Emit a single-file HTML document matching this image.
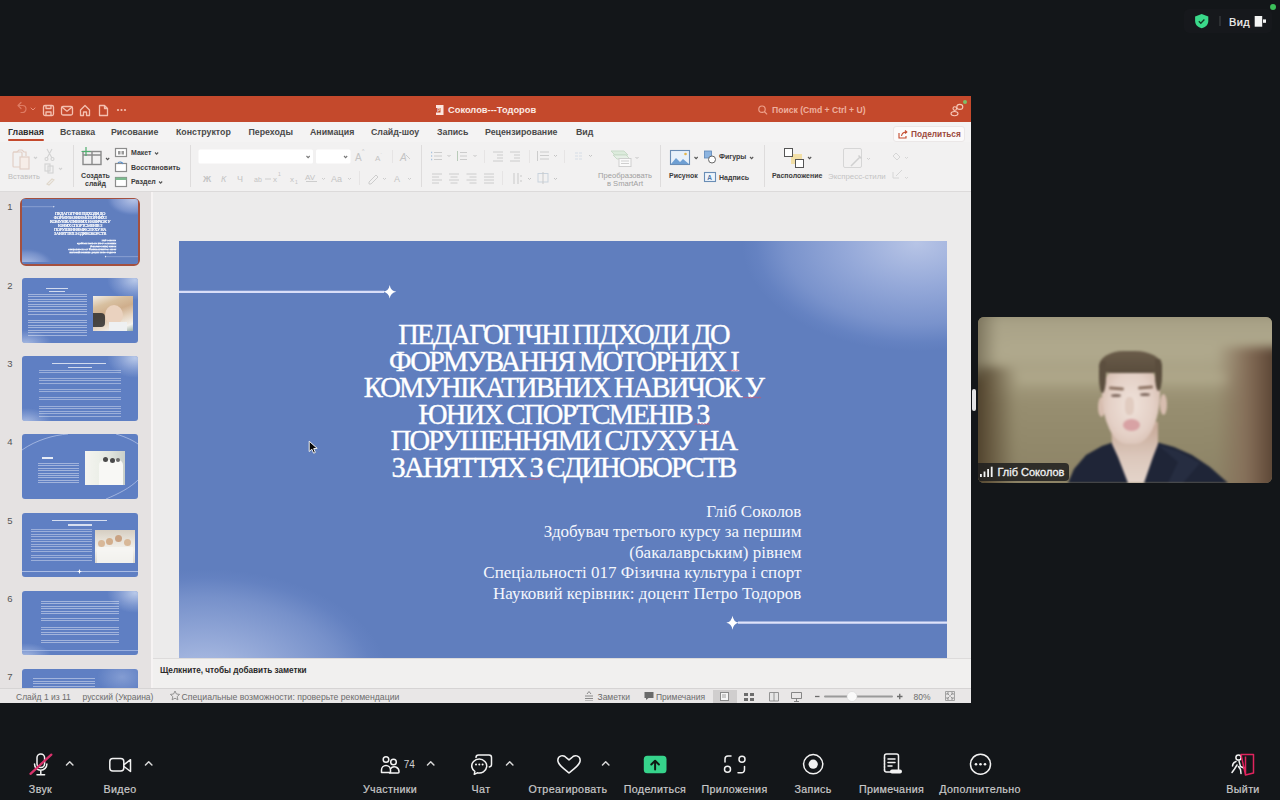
<!DOCTYPE html>
<html><head><meta charset="utf-8">
<style>
*{margin:0;padding:0;box-sizing:border-box}
html,body{width:1280px;height:800px;overflow:hidden;background:#131619;font-family:"Liberation Sans",sans-serif}
.abs{position:absolute}
#win{position:absolute;left:0;top:96px;width:971px;height:607px;background:#f2f1f1;overflow:hidden}
#title{position:absolute;left:0;top:0;width:971px;height:26px;background:#c4492c}
#tabs{position:absolute;left:0;top:26px;width:971px;height:20px;background:#f4f3f3}
#ribbon{position:absolute;left:0;top:46px;width:971px;height:50px;background:#f2f1f1;border-bottom:1px solid #dcdada}
#thumbs{position:absolute;left:0;top:96px;width:153px;height:496px;background:#e5e2e2;border-right:2px solid #f6f3f3}
#stage{position:absolute;left:153px;top:96px;width:818px;height:466px;background:#ecebeb}
#notes{position:absolute;left:153px;top:562px;width:819px;height:30px;background:#f1f0ef;border-top:1px solid #dddbdb}
#status{position:absolute;left:0;top:592px;width:971px;height:15px;background:#e9e7e7;border-top:1px solid #d6d4d4}
#slide{position:absolute;left:179px;top:241px;width:768px;height:417px;background:#607ebe;overflow:hidden}
#video{position:absolute;left:978px;top:317px;width:294px;height:166px;border-radius:6px;background:#8a8266;overflow:hidden}
.tab{position:absolute;top:5px;font-size:8.8px;font-weight:bold;color:#4a4a4a;white-space:nowrap}
.rl{position:absolute;font-size:7px;font-weight:bold;color:#3c3c3c;white-space:nowrap}
.thumb{background:#5f7fc3;border-radius:3px;overflow:hidden}
.thumb>div,.thumb>svg{filter:blur(0.6px)}
.st{position:absolute;top:2.5px;font-size:8.5px;color:#6c6c6c;white-space:nowrap}
.tb{position:absolute;top:782.5px;color:#c9c9c9;font-size:10.7px;letter-spacing:0.35px;-webkit-text-stroke:0.2px #c9c9c9;text-align:center;white-space:nowrap}
</style></head>
<body>
<div id="win">
  <div id="title">
    <svg class="abs" style="left:0;top:0" width="971" height="26" viewBox="0 0 971 26">
      <g fill="none" stroke="#e9917a" stroke-width="1.2" stroke-linecap="round" stroke-linejoin="round">
        <path d="M19 11.5 L22 8.5 M19 11.5 L22 14.5 M19 11.5 H23.5 a3.5 3.5 0 0 1 0 7 H22" opacity="0.7" transform="translate(-1,-2)"/>
        <path d="M31 12 l2 2 l2 -2" stroke-width="1"/>
      </g>
      <g fill="none" stroke="#f4c0b0" stroke-width="1.3" stroke-linejoin="round">
        <rect x="43.5" y="9.5" width="10" height="10" rx="1.5"/>
        <path d="M46 9.5 v3 h5 v-3 M46 19.5 v-3.5 h5 v3.5"/>
        <rect x="61.5" y="10.5" width="11" height="8.5" rx="1.5"/>
        <path d="M61.8 11 l5.2 4.2 l5.2 -4.2"/>
        <path d="M80.5 19.5 v-5.5 l4.5 -4.5 l4.5 4.5 v5.5 h-3 v-3.5 h-3 v3.5 z"/>
        <path d="M99.5 9.5 h5 l3 3 v7 h-8 z M104.5 9.5 v3 h3"/>
      </g>
      <g fill="#f4c0b0"><circle cx="118" cy="14" r="1.1"/><circle cx="121.5" cy="14" r="1.1"/><circle cx="125" cy="14" r="1.1"/></g>
      <g>
        <rect x="436" y="9" width="7.5" height="10" fill="#fbe6df"/>
        <rect x="436" y="12" width="4.5" height="4.5" fill="#c4492c"/>
        <text x="437.2" y="16" font-family="Liberation Sans" font-weight="bold" font-size="4.5" fill="#fbe6df">P</text>
      </g>
      <g fill="none" stroke="#eea08a" stroke-width="1.2"><circle cx="762" cy="13.2" r="3.2"/><path d="M764.3 15.5 l2.8 2.8"/></g>
      <g fill="none" stroke="#f6c8b8" stroke-width="1.1">
        <ellipse cx="959.8" cy="10.9" rx="3" ry="2.5"/>
        <circle cx="954.8" cy="12.6" r="1.8"/><ellipse cx="954.5" cy="17.6" rx="3.5" ry="2.1"/>
      </g>
      <circle cx="965" cy="6" r="2" fill="#7fbf6a"/>
    </svg>
    <div class="abs" style="left:448px;top:9px;font-size:9.3px;font-weight:bold;color:#fbeae4;letter-spacing:0px;white-space:nowrap">Соколов---Тодоров</div>
    <div class="abs" style="left:772px;top:9px;font-size:8.6px;font-weight:bold;color:#eeb09e;white-space:nowrap">Поиск (Cmd + Ctrl + U)</div>
  </div>
  <div id="tabs">
    <div class="tab" style="left:8px;color:#2e2e2e">Главная</div>
    <div class="abs" style="left:8px;top:17px;width:36px;height:2px;background:#c4492c;border-radius:1px"></div>
    <div class="tab" style="left:60px">Вставка</div>
    <div class="tab" style="left:111px">Рисование</div>
    <div class="tab" style="left:176px">Конструктор</div>
    <div class="tab" style="left:248.5px">Переходы</div>
    <div class="tab" style="left:310px">Анимация</div>
    <div class="tab" style="left:371px">Слайд-шоу</div>
    <div class="tab" style="left:437px">Запись</div>
    <div class="tab" style="left:485px">Рецензирование</div>
    <div class="tab" style="left:576px">Вид</div>
    <div class="abs" style="left:893px;top:4px;width:72px;height:16px;background:#fbfafa;border:1px solid #ebe7e7;border-radius:3px"></div>
    <svg class="abs" style="left:897px;top:6px" width="12" height="12" viewBox="0 0 12 12"><g fill="none" stroke="#c4492c" stroke-width="1.1"><path d="M2 5 v5 h7 v-2"/><path d="M4.5 8 c0.5 -3 2 -4 5 -4 M8 2.5 l1.8 1.5 l-1.8 1.5"/></g></svg>
    <div class="abs" style="left:911px;top:7px;font-size:8.3px;font-weight:bold;color:#9c4a3e;white-space:nowrap">Поделиться</div>
  </div>
  <div id="ribbon">
    <svg class="abs" style="left:0;top:0" width="971" height="50" viewBox="0 142 971 50">
      <!-- separators -->
      <g stroke="#dedcdc" stroke-width="1">
        <path d="M73.5 145 V187 M190.5 145 V187 M421.5 145 V187 M660.5 145 V187 M764.5 145 V187"/>
        <path d="M392.5 150 V163 M359.5 171 V185 M484.5 150 V163 M529.5 150 V163 M564.5 150 V163 M502.5 171 V185" stroke="#e6e4e4"/>
      </g>
      <!-- clipboard faded -->
      <g fill="none" stroke="#e2cfc6" stroke-width="1.2">
        <path d="M13 152 h4 l2 -2 h3 l2 2 h2 v4"/><rect x="13" y="152" width="9" height="15" rx="1"/>
        <rect x="20" y="157" width="9" height="12" fill="#f6ede8"/>
        <path d="M34 157 l1.5 1.5 l1.5 -1.5" stroke="#cfcfcf"/>
      </g>
      <g fill="none" stroke="#d2d2d2" stroke-width="1.1">
        <path d="M47 149 l5 9 M52 149 l-5 9"/><circle cx="46.5" cy="159" r="1.5"/><circle cx="52.5" cy="159" r="1.5"/>
        <rect x="45" y="164" width="5" height="7"/><rect x="48" y="166" width="5" height="7"/>
        <path d="M59 168 l1.5 1.5 l1.5 -1.5"/>
        <path d="M47 184 l5 -5 l2 1 l-5 5 z" stroke="#e0d8cc"/>
      </g>
      <!-- new slide -->
      <g fill="none" stroke="#8a8a8a" stroke-width="1.4">
        <rect x="83" y="151.5" width="18" height="13"/><path d="M92 151.5 v13 M83 155 h18"/>
      </g>
      <path d="M86 147 v9 M81.5 151.5 h9" stroke="#4fae6e" stroke-width="1.2"/>
      <path d="M106 158 l1.6 1.6 l1.6 -1.6" fill="none" stroke="#555" stroke-width="1.1"/>
      <!-- layout icons -->
      <g>
        <rect x="115.5" y="148.5" width="11" height="8" fill="#fff" stroke="#8c8c8c" stroke-width="1.2"/>
        <rect x="118" y="151" width="2.5" height="3.5" fill="#9a9a9a"/><rect x="121.5" y="151" width="2.5" height="3.5" fill="#9a9a9a"/>
        <rect x="115.5" y="163.5" width="11" height="8" fill="#fff" stroke="#8c8c8c" stroke-width="1.2"/>
        <path d="M118 163 a3 3 0 0 1 5 1" fill="none" stroke="#5a8fc9" stroke-width="1.1"/>
        <rect x="115.5" y="177.5" width="11" height="9" fill="#fff" stroke="#8c8c8c" stroke-width="1.2"/>
        <rect x="115.5" y="177.5" width="11" height="2.5" fill="#7cba8e"/>
        <g fill="none" stroke="#555" stroke-width="1.1"><path d="M155 152.5 l1.6 1.6 l1.6 -1.6 M159 181.5 l1.6 1.6 l1.6 -1.6"/></g>
      </g>
      <!-- font boxes -->
      <rect x="198.5" y="149.5" width="114.5" height="14" rx="1.5" fill="#fff"/>
      <rect x="316" y="149.5" width="34.5" height="14" rx="1.5" fill="#fff"/>
      <g fill="none" stroke="#777" stroke-width="1.1"><path d="M306.5 156 l1.6 1.6 l1.6 -1.6 M344 156 l1.6 1.6 l1.6 -1.6"/></g>
      <g font-family="Liberation Sans" fill="#c4c4c4">
        <text x="355" y="161" font-size="10">A</text><text x="362" y="153" font-size="5">^</text>
        <text x="375" y="161" font-size="8">A</text><text x="380.5" y="154" font-size="4">-</text>
        <text x="400" y="161" font-size="10" font-style="italic">A</text>
        <text x="203" y="182" font-size="9" font-weight="bold">Ж</text>
        <text x="221" y="182" font-size="9" font-style="italic">К</text>
        <text x="237" y="182" font-size="9">Ч</text>
        <text x="254" y="182" font-size="7">ab</text>
        <text x="273" y="182" font-size="8">x</text><text x="278" y="176" font-size="5">1</text>
        <text x="290" y="182" font-size="8">x</text><text x="295" y="184" font-size="5">1</text>
        <text x="305" y="180" font-size="8">AV</text>
        <text x="331" y="182" font-size="9">Aa</text>
        <text x="394" y="182" font-size="9">A</text>
      </g>
      <g fill="none" stroke="#cdcdcd" stroke-width="1">
        <path d="M265 179 h6 M306 181.5 h11"/>
        <path d="M322 178 l1.5 1.5 l1.5 -1.5 M348 178 l1.5 1.5 l1.5 -1.5 M383 178 l1.5 1.5 l1.5 -1.5 M408 178 l1.5 1.5 l1.5 -1.5"/>
        <path d="M369 182 l7 -7 l2 2 l-7 7 h-2 z"/>
        <path d="M406 155 l4 4"/>
      </g>
      <!-- paragraph -->
      <g fill="none" stroke="#cfd6de" stroke-width="1">
        <path d="M434 152.5 h8 M434 156 h8 M434 159.5 h8" stroke="#cccccc"/>
        <path d="M431 152.5 h1.2 M431 156 h1.2 M431 159.5 h1.2" stroke="#a9c3df" stroke-width="1.4"/>
        <path d="M460 152.5 h7 M460 156 h7 M460 159.5 h7" stroke="#cccccc"/>
        <path d="M457.5 151 v10" stroke="#b9cbb9"/>
        <path d="M447.5 155 l1.5 1.5 l1.5 -1.5 M473.5 155 l1.5 1.5 l1.5 -1.5 M554 155 l1.5 1.5 l1.5 -1.5 M589 155 l1.5 1.5 l1.5 -1.5" stroke="#c4c4c4"/>
        <path d="M493 152 h10 M497 155 h6 M497 158 h6 M493 161 h10 M510 152 h10 M514 155 h6 M514 158 h6 M510 161 h10" stroke="#cccccc"/>
        <path d="M540 152 h9 M540 155.5 h9 M540 159 h9 M537.5 151 v10" stroke="#cccccc"/>
        <path d="M575 153 h3 M579 153 h3 M575 156 h3 M579 156 h3 M575 159 h3 M579 159 h3" stroke="#d6dde6"/>
        <path d="M432 174 h10 M432 177 h7 M432 180 h10 M432 183 h7" stroke="#cccccc"/>
        <path d="M449 174 h10 M450.5 177 h7 M449 180 h10 M450.5 183 h7" stroke="#cccccc"/>
        <path d="M466.5 174 h10 M469.5 177 h7 M466.5 180 h10 M469.5 183 h7" stroke="#cccccc"/>
        <path d="M484 174 h10 M484 177 h10 M484 180 h10 M484 183 h10" stroke="#cccccc"/>
        <path d="M514 173 v11 M518 173 v11 M520 176 h2 M520 181 h2" stroke="#c9c9c9"/>
        <path d="M528 178 l1.5 1.5 l1.5 -1.5 M554 178 l1.5 1.5 l1.5 -1.5" stroke="#c4c4c4"/>
        <rect x="538" y="173.5" width="10" height="8.5" stroke="#c9d3dd"/><path d="M543 172 v12" stroke="#c9c9c9"/>
      </g>
      <!-- smartart -->
      <g fill="none" stroke="#cfcfcf" stroke-width="1">
        <path d="M611 151 h13 l4 4 h-13 z" fill="#dcebdc" stroke="#c9dbc9"/>
        <path d="M613 155 h13 l4 4 h-13 z" fill="#e6efe6" stroke="#c9dbc9"/>
        <rect x="619" y="158.5" width="12" height="8" fill="#fafafa"/>
        <path d="M621 161 h8 M621 163.5 h8"/>
        <path d="M635.5 157 l1.5 1.5 l1.5 -1.5" stroke="#c4c4c4"/>
      </g>
      <!-- picture -->
      <g>
        <rect x="670.5" y="150.5" width="19" height="14" fill="#e8f1fa" stroke="#6a8db5" stroke-width="1.1"/>
        <path d="M671 164 l5 -6 l4 4 l3 -3 l6 5 z" fill="#6e9fd3"/>
        <circle cx="685.5" cy="154" r="1.3" fill="#e5b64a"/>
        <path d="M694.5 157 l1.6 1.6 l1.6 -1.6" fill="none" stroke="#555" stroke-width="1.1"/>
        <rect x="704.5" y="151" width="7" height="7" fill="#8cb4e0" stroke="#5d87b8" stroke-width="0.8"/>
        <circle cx="712" cy="159.5" r="3.5" fill="#fff" stroke="#666" stroke-width="1"/>
        <path d="M750 157 l1.6 1.6 l1.6 -1.6" fill="none" stroke="#555" stroke-width="1.1"/>
        <rect x="704.5" y="172.5" width="11" height="9" fill="#eef4fb" stroke="#6a8db5" stroke-width="1.1"/>
        <text x="707.2" y="180" font-family="Liberation Sans" font-size="6.5" fill="#4f78a8" font-weight="bold">A</text>
      </g>
      <!-- arrange -->
      <g>
        <rect x="791" y="154" width="11" height="10" fill="#f2dfa6"/>
        <rect x="784.5" y="148.5" width="8" height="8" fill="#fff" stroke="#555" stroke-width="1"/>
        <rect x="795.5" y="159.5" width="8" height="8" fill="#fff" stroke="#555" stroke-width="1"/>
        <path d="M808 157 l1.6 1.6 l1.6 -1.6" fill="none" stroke="#555" stroke-width="1.1"/>
      </g>
      <!-- express styles -->
      <g fill="none" stroke="#d6d6d6" stroke-width="1">
        <rect x="843.5" y="148.5" width="18" height="19" rx="1.5"/>
        <path d="M851 166 l9 -9 M858.5 155.5 l3 3" stroke="#d0d0d0" stroke-width="1.5"/>
        <path d="M867 158 l1.5 1.5 l1.5 -1.5" stroke="#d0d0d0"/>
        <path d="M893 156 l3 -3 l4 4 l-3 3 z M896 176 l6 -6 M893 172 v6 h6"/>
        <path d="M905 157 l1.5 1.5 l1.5 -1.5 M905 177 l1.5 1.5 l1.5 -1.5"/>
      </g>
    </svg>
    <div class="rl" style="left:8px;top:30px;font-size:7.5px;color:#bcbcbc;font-weight:normal">Вставить</div>
    <div class="rl" style="left:81px;top:30px;width:29px;text-align:center;line-height:8px">Создать<br>слайд</div>
    <div class="rl" style="left:131px;top:7px">Макет</div>
    <div class="rl" style="left:131px;top:22px">Восстановить</div>
    <div class="rl" style="left:131px;top:36px">Раздел</div>
    <div class="rl" style="left:597px;top:30px;width:56px;text-align:center;line-height:8px;font-weight:normal;color:#a0a0a0;font-size:7.6px">Преобразовать<br>в SmartArt</div>
    <div class="rl" style="left:669px;top:30px">Рисунок</div>
    <div class="rl" style="left:719px;top:11px">Фигуры</div>
    <div class="rl" style="left:719px;top:32px">Надпись</div>
    <div class="rl" style="left:772px;top:30px">Расположение</div>
    <div class="rl" style="left:828px;top:30px;font-weight:normal;color:#c4c4c4;font-size:7.9px">Экспресс-стили</div>
  </div>
  <div id="thumbs"></div>
  <div id="stage"></div>
  <div id="notes">
    <div class="abs" style="left:7px;top:6.5px;font-size:8.2px;font-weight:bold;color:#2a2a2a;white-space:nowrap">Щелкните, чтобы добавить заметки</div>
  </div>
  <div id="status">
    <div class="st" style="left:16px">Слайд 1 из 11</div>
    <div class="st" style="left:82.5px">русский (Украина)</div>
    <svg class="abs" style="left:169px;top:1px" width="12" height="12" viewBox="0 0 12 12"><path d="M6 1 l1.4 3 l3.2 0.4 l-2.4 2.2 l0.7 3.2 l-2.9 -1.6 l-2.9 1.6 l0.7 -3.2 l-2.4 -2.2 l3.2 -0.4 z" fill="none" stroke="#8a8a8a" stroke-width="0.9"/></svg>
    <div class="st" style="left:181.5px;font-size:8.7px">Специальные возможности: проверьте рекомендации</div>
    <svg class="abs" style="left:584px;top:2px" width="10" height="10" viewBox="0 0 10 10"><g stroke="#8a8a8a" stroke-width="1"><path d="M1 5 h8 M1 7.5 h8 M1 10 h8"/><path d="M3 3 l2 -2.5 l2 2.5" fill="none"/></g></svg>
    <div class="st" style="left:597.5px">Заметки</div>
    <svg class="abs" style="left:644px;top:2px" width="10" height="10" viewBox="0 0 10 10"><path d="M0.5 1 h9 v6 h-5 l-2.5 2 v-2 h-1.5 z" fill="#6a6a6a"/></svg>
    <div class="st" style="left:656px">Примечания</div>
    <div class="abs" style="left:713px;top:1px;width:24px;height:14px;background:#d0cece"></div>
    <svg class="abs" style="left:700px;top:0" width="271" height="15" viewBox="700 688 271 15">
      <rect x="720.5" y="691.5" width="8" height="8" fill="#f6f6f6" stroke="#8a8a8a"/>
      <path d="M722 694 h4 M722 696 h4" stroke="#8a8a8a" stroke-width="0.8"/>
      <g fill="#6c6c6c"><rect x="744" y="692" width="4" height="3"/><rect x="750" y="692" width="4" height="3"/><rect x="744" y="697" width="4" height="3"/><rect x="750" y="697" width="4" height="3"/></g>
      <path d="M769.5 691.5 h9 v8.5 h-9 z M774 691.5 v8.5" fill="#e6e6e6" stroke="#8a8a8a" stroke-width="0.9"/>
      <path d="M791.5 691.5 h10 v6 h-10 z M796.5 697.5 v3 M794 700.5 h5" fill="none" stroke="#7a7a7a" stroke-width="0.9"/>
      <path d="M815 695.5 h4.5" stroke="#6c6c6c" stroke-width="1.3"/>
      <path d="M825 695.5 H892" stroke="#9a9a9a" stroke-width="2" stroke-linecap="round"/>
      <circle cx="852" cy="695.5" r="5" fill="#fafafa" stroke="#d0d0d0" stroke-width="0.5"/>
      <path d="M897 695.5 h5.5 M899.75 692.75 v5.5" stroke="#6c6c6c" stroke-width="1.3"/>
      <path d="M945.5 690.5 h9 v9 h-9 z" fill="none" stroke="#9a9a9a" stroke-width="0.9"/><path d="M947.5 692.5 l2 2 M952.5 692.5 l-2 2 M947.5 697.5 l2 -2 M952.5 697.5 l-2 -2 M947 692 h2 M947 692 v2 M953 692 h-2 M953 692 v2 M947 698 h2 M947 698 v-2 M953 698 h-2 M953 698 v-2" fill="none" stroke="#8a8a8a" stroke-width="0.9"/>
    </svg>
    <div class="st" style="left:913.5px">80%</div>
  </div>
</div>
<div id="thpanel" class="abs" style="left:0;top:192px;width:151px;height:496px;overflow:hidden">
<div class="abs" style="left:5.5px;top:8.5px;width:9px;text-align:center;font-size:9.5px;color:#555">1</div>
<div class="abs" style="left:5.5px;top:87.5px;width:9px;text-align:center;font-size:9.5px;color:#555">2</div>
<div class="abs" style="left:5.5px;top:165.5px;width:9px;text-align:center;font-size:9.5px;color:#555">3</div>
<div class="abs" style="left:5.5px;top:243.5px;width:9px;text-align:center;font-size:9.5px;color:#555">4</div>
<div class="abs" style="left:5.5px;top:322.5px;width:9px;text-align:center;font-size:9.5px;color:#555">5</div>
<div class="abs" style="left:5.5px;top:400.5px;width:9px;text-align:center;font-size:9.5px;color:#555">6</div>
<div class="abs" style="left:5.5px;top:478.5px;width:9px;text-align:center;font-size:9.5px;color:#555">7</div>
<div class="abs" style="left:19.5px;top:5.5px;width:120px;height:68.5px;border:2px solid #a4503f;border-radius:6px"></div>
<div class="abs thumb" style="left:22px;top:7px;width:116px;height:65px"><div id="t1" class="abs" style="left:0;top:0;width:768px;height:432px;transform:scale(0.15104);transform-origin:0 0;background:#607ebe">
  <div class="abs" style="left:0;top:0;width:768px;height:417px;background:
    radial-gradient(ellipse 175px 108px at 738px 2px, rgba(205,214,240,0.8) 0%, rgba(185,198,235,0.6) 40%, rgba(160,178,225,0.4) 75%, rgba(130,155,215,0.15) 92%, rgba(96,126,190,0) 100%),
    radial-gradient(ellipse 185px 112px at 25px 440px, rgba(200,212,240,0.8) 0%, rgba(180,195,232,0.6) 40%, rgba(155,175,222,0.38) 75%, rgba(130,155,215,0.12) 92%, rgba(96,126,190,0) 100%)"></div>
  <svg class="abs" style="left:0;top:0" width="768" height="417" viewBox="179 241 768 417">
    <path d="M179 291.8 H384" stroke="#d9def8" stroke-width="2.2"/>
    <path d="M389.7 285 Q390.6 290.9 396.3 291.8 Q390.6 292.7 389.7 298.6 Q388.8 292.7 383.1 291.8 Q388.8 290.9 389.7 285 Z" fill="#fff"/>
    <path d="M738 622.7 H947" stroke="#dfe3fa" stroke-width="2.2"/>
    <path d="M732.5 615.7 Q733.4 621.8 738.7 622.7 Q733.4 623.6 732.5 629.7 Q731.6 623.6 726.3 622.7 Q731.6 621.8 732.5 615.7 Z" fill="#fff"/>
  </svg>
  <div class="abs" id="ttl" style="left:0;top:0;width:768px;text-align:center;color:#fff;font-family:'Liberation Serif',serif;font-size:28.5px;line-height:26.56px;-webkit-text-stroke:1.3px #fff;white-space:nowrap">
    <div style="position:absolute;left:0.5px;width:768px;top:81px;letter-spacing:-1.75px;word-spacing:-1px">ПЕДАГОГІЧНІ ПІДХОДИ ДО<br>ФОРМУВАННЯ МОТОРНИХ І<br>КОМУНІКАТИВНИХ НАВИЧОК У<br>ЮНИХ СПОРТСМЕНІВ З<br>ПОРУШЕННЯМИ СЛУХУ НА<br>ЗАНЯТТЯХ З ЄДИНОБОРСТВ</div>
  </div>
  <div class="abs" style="right:145.6px;top:260.5px;text-align:right;color:#f4f6fc;font-family:'Liberation Serif',serif;font-size:17px;line-height:20.5px;white-space:nowrap;-webkit-text-stroke:2px #f4f6fc">Гліб Соколов<br>Здобувач третього курсу за першим<br>(бакалаврським) рівнем<br>Спеціальності 017 Фізична культура і спорт<br>Науковий керівник: доцент Петро Тодоров</div>
</div></div>
<div class="abs thumb" style="left:22px;top:86px;width:116px;height:65px"><div class="abs" style="left:0;top:0;width:116px;height:65px;background:radial-gradient(ellipse 28px 20px at 113px 2px,rgba(215,225,245,0.75),rgba(200,212,240,0.3) 60%,rgba(200,212,240,0) 100%)"></div><div class="abs" style="left:0;top:0;width:116px;height:65px;background:radial-gradient(ellipse 26px 14px at 4px 66px,rgba(215,225,245,0.6),rgba(200,212,240,0.25) 60%,rgba(200,212,240,0) 100%)"></div><div class="abs" style="left:24px;top:9.5px;width:22px;height:1.3px;background:rgba(255,255,255,0.72)"></div><div class="abs" style="left:27px;top:12.5px;width:16px;height:1.3px;background:rgba(255,255,255,0.72)"></div><div class="abs" style="left:6px;top:15.5px;width:59px;height:22px;background:repeating-linear-gradient(to bottom,rgba(255,255,255,0.42) 0 1px,rgba(255,255,255,0) 1px 2.45px)"></div><div class="abs" style="left:6px;top:42px;width:59px;height:16px;background:repeating-linear-gradient(to bottom,rgba(255,255,255,0.42) 0 1px,rgba(255,255,255,0) 1px 2.45px)"></div><div class="abs" style="left:71px;top:18px;width:40px;height:35px;background:linear-gradient(160deg,#f2eee8 0%,#d8c0a0 25%,#cfae8c 45%,#e6d4c0 65%,#f4f2ee 85%,#9cb0a8 100%)"><div class="abs" style="left:0px;top:17px;width:12px;height:14px;background:#2e2e2e;border-radius:0 4px 4px 0;opacity:0.85"></div><div class="abs" style="left:12px;top:9px;width:18px;height:20px;background:#ead2bf;border-radius:50%"></div><div class="abs" style="left:16px;top:26px;width:18px;height:9px;background:#eef0f2"></div></div></div>
<div class="abs thumb" style="left:22px;top:164px;width:116px;height:65px"><div class="abs" style="left:0;top:0;width:116px;height:65px;background:radial-gradient(ellipse 28px 20px at 113px 2px,rgba(215,225,245,0.75),rgba(200,212,240,0.3) 60%,rgba(200,212,240,0) 100%)"></div><div class="abs" style="left:0;top:0;width:116px;height:65px;background:radial-gradient(ellipse 26px 14px at 4px 66px,rgba(215,225,245,0.6),rgba(200,212,240,0.25) 60%,rgba(200,212,240,0) 100%)"></div><div class="abs" style="left:30px;top:6.5px;width:54px;height:1.3px;background:rgba(255,255,255,0.72)"></div><div class="abs" style="left:46px;top:11px;width:24px;height:1.3px;background:rgba(255,255,255,0.72)"></div><div class="abs" style="left:17px;top:14px;width:82px;height:4.5px;background:repeating-linear-gradient(to bottom,rgba(255,255,255,0.38) 0 1px,rgba(255,255,255,0) 1px 2.4px)"></div><div class="abs" style="left:17px;top:22px;width:82px;height:7px;background:repeating-linear-gradient(to bottom,rgba(255,255,255,0.38) 0 1px,rgba(255,255,255,0) 1px 2.4px)"></div><div class="abs" style="left:17px;top:33px;width:82px;height:4.5px;background:repeating-linear-gradient(to bottom,rgba(255,255,255,0.38) 0 1px,rgba(255,255,255,0) 1px 2.4px)"></div><div class="abs" style="left:17px;top:41px;width:82px;height:4.5px;background:repeating-linear-gradient(to bottom,rgba(255,255,255,0.38) 0 1px,rgba(255,255,255,0) 1px 2.4px)"></div><div class="abs" style="left:17px;top:50px;width:82px;height:10.5px;background:repeating-linear-gradient(to bottom,rgba(255,255,255,0.38) 0 1px,rgba(255,255,255,0) 1px 2.4px)"></div></div>
<div class="abs thumb" style="left:22px;top:242px;width:116px;height:65px"><svg class="abs" style="left:0;top:0" width="116" height="65"><g fill="none" stroke="rgba(220,228,250,0.65)" stroke-width="0.8"><path d="M0 16 C14 6 32 1 46 0"/><path d="M94 0 C104 3 112 7 116 10"/><path d="M116 46 C108 54 96 60 84 65"/></g></svg><div class="abs" style="left:20px;top:23px;width:11px;height:1.6px;background:rgba(255,255,255,0.85)"></div><div class="abs" style="left:16px;top:28.5px;width:41px;height:20px;background:repeating-linear-gradient(to bottom,rgba(255,255,255,0.42) 0 1px,rgba(255,255,255,0) 1px 2.4px)"></div><div class="abs" style="left:62.5px;top:17px;width:40.5px;height:34px;background:linear-gradient(90deg,#f4f4f0 0%,#ecefe8 35%,#dfe3dc 65%,#c9cfca 100%)"><div class="abs" style="left:14px;top:9px;width:24px;height:25px;background:#f8f8f5;border-radius:5px 5px 0 0"></div><div class="abs" style="left:18px;top:6px;width:5px;height:5px;background:#4a4a4a;border-radius:50%"></div><div class="abs" style="left:25px;top:7px;width:5px;height:5px;background:#4a4a4a;border-radius:50%"></div><div class="abs" style="left:31px;top:7px;width:4px;height:4px;background:#6a6a6a;border-radius:50%"></div></div></div>
<div class="abs thumb" style="left:22px;top:321px;width:116px;height:64px"><div class="abs" style="left:30px;top:7px;width:55px;height:1.3px;background:rgba(255,255,255,0.75)"></div><div class="abs" style="left:46px;top:11.3px;width:24px;height:1.3px;background:rgba(255,255,255,0.75)"></div><div class="abs" style="left:9px;top:16px;width:61px;height:8px;background:repeating-linear-gradient(to bottom,rgba(255,255,255,0.38) 0 1px,rgba(255,255,255,0) 1px 2.4px)"></div><div class="abs" style="left:9px;top:26px;width:61px;height:13px;background:repeating-linear-gradient(to bottom,rgba(255,255,255,0.38) 0 1px,rgba(255,255,255,0) 1px 2.4px)"></div><div class="abs" style="left:9px;top:42px;width:61px;height:7px;background:repeating-linear-gradient(to bottom,rgba(255,255,255,0.38) 0 1px,rgba(255,255,255,0) 1px 2.4px)"></div><div class="abs" style="left:72.5px;top:17px;width:40px;height:33px;background:linear-gradient(180deg,#d6cec2 0%,#e6e1d8 30%,#f3f1ec 60%,#ddd8cf 100%)"><div class="abs" style="left:3px;top:10px;width:7px;height:7px;background:#d8b898;border-radius:50%"></div><div class="abs" style="left:11px;top:8px;width:7px;height:7px;background:#d2ae8c;border-radius:50%"></div><div class="abs" style="left:20px;top:5px;width:7px;height:7px;background:#c9a283;border-radius:50%"></div><div class="abs" style="left:29px;top:9px;width:7px;height:7px;background:#d8b898;border-radius:50%"></div><div class="abs" style="left:2px;top:17px;width:36px;height:16px;background:#f6f6f4;opacity:0.8"></div></div><div class="abs" style="left:0;top:58px;width:116px;height:1px;background:rgba(220,228,250,0.6)"></div><div class="abs" style="left:55px;top:56px;width:5px;height:5px;background:#fff;clip-path:polygon(50% 0,65% 40%,100% 50%,65% 60%,50% 100%,35% 60%,0 50%,35% 40%)"></div></div>
<div class="abs thumb" style="left:22px;top:399px;width:116px;height:64px"><div class="abs" style="left:0;top:0;width:116px;height:65px;background:radial-gradient(ellipse 28px 20px at 113px 2px,rgba(215,225,245,0.75),rgba(200,212,240,0.3) 60%,rgba(200,212,240,0) 100%)"></div><div class="abs" style="left:0;top:0;width:116px;height:65px;background:radial-gradient(ellipse 26px 14px at 4px 66px,rgba(215,225,245,0.6),rgba(200,212,240,0.25) 60%,rgba(200,212,240,0) 100%)"></div><div class="abs" style="left:19px;top:10px;width:78px;height:12.5px;background:repeating-linear-gradient(to bottom,rgba(255,255,255,0.42) 0 1px,rgba(255,255,255,0) 1px 2.45px)"></div><div class="abs" style="left:19px;top:27px;width:78px;height:5px;background:repeating-linear-gradient(to bottom,rgba(255,255,255,0.42) 0 1px,rgba(255,255,255,0) 1px 2.45px)"></div><div class="abs" style="left:19px;top:35.5px;width:78px;height:9px;background:repeating-linear-gradient(to bottom,rgba(255,255,255,0.42) 0 1px,rgba(255,255,255,0) 1px 2.45px)"></div><div class="abs" style="left:19px;top:49px;width:78px;height:5px;background:repeating-linear-gradient(to bottom,rgba(255,255,255,0.42) 0 1px,rgba(255,255,255,0) 1px 2.45px)"></div><div class="abs" style="left:0;top:59px;width:116px;height:1.2px;background:rgba(200,215,245,0.55)"></div></div>
<div class="abs thumb" style="left:22px;top:477px;width:116px;height:30px"><div class="abs" style="left:0;top:0;width:116px;height:30px;background:radial-gradient(ellipse 25px 18px at 100px 8px,rgba(200,212,240,0.35),rgba(200,212,240,0) 100%)"></div><div class="abs" style="left:11px;top:9px;width:62px;height:12px;background:repeating-linear-gradient(to bottom,rgba(255,255,255,0.42) 0 1px,rgba(255,255,255,0) 1px 2.6px)"></div></div>
</div>
<div id="slide">
  <div class="abs" style="left:0;top:0;width:768px;height:417px;background:
    radial-gradient(ellipse 175px 108px at 738px 2px, rgba(205,214,240,0.8) 0%, rgba(185,198,235,0.6) 40%, rgba(160,178,225,0.4) 75%, rgba(130,155,215,0.15) 92%, rgba(96,126,190,0) 100%),
    radial-gradient(ellipse 185px 112px at 25px 440px, rgba(200,212,240,0.8) 0%, rgba(180,195,232,0.6) 40%, rgba(155,175,222,0.38) 75%, rgba(130,155,215,0.12) 92%, rgba(96,126,190,0) 100%)"></div>
  <svg class="abs" style="left:0;top:0" width="768" height="417" viewBox="179 241 768 417">
    <path d="M179 291.8 H384" stroke="#d9def8" stroke-width="2.2"/>
    <path d="M389.7 285 Q390.6 290.9 396.3 291.8 Q390.6 292.7 389.7 298.6 Q388.8 292.7 383.1 291.8 Q388.8 290.9 389.7 285 Z" fill="#fff"/>
    <path d="M738 622.7 H947" stroke="#dfe3fa" stroke-width="2.2"/>
    <path d="M732.5 615.7 Q733.4 621.8 738.7 622.7 Q733.4 623.6 732.5 629.7 Q731.6 623.6 726.3 622.7 Q731.6 621.8 732.5 615.7 Z" fill="#fff"/>
  </svg>
  <div class="abs" id="ttl" style="left:0;top:0;width:768px;text-align:center;color:#fff;font-family:'Liberation Serif',serif;font-size:28.5px;line-height:26.56px;-webkit-text-stroke:0.35px #fff;white-space:nowrap">
    <div style="position:absolute;left:0.5px;width:768px;top:81px;letter-spacing:-1.75px;word-spacing:-1px">ПЕДАГОГІЧНІ ПІДХОДИ ДО<br>ФОРМУВАННЯ МОТОРНИХ І<br>КОМУНІКАТИВНИХ НАВИЧОК У<br>ЮНИХ СПОРТСМЕНІВ З<br>ПОРУШЕННЯМИ СЛУХУ НА<br>ЗАНЯТТЯХ З ЄДИНОБОРСТВ</div>
  </div>
  <svg class="abs" style="left:0;top:0" width="768" height="417" viewBox="179 241 768 417"><g fill="none" stroke="#d9506a" stroke-width="0.8" opacity="0.85">
<path d="M726.5 371 l1.5 -1 l1.5 1 l1.5 -1 l1.5 1 l1.5 -1 l1.5 1 l1.5 -1 l1.5 1"/>
<path d="M743 398 l1.5 -1 l1.5 1 l1.5 -1 l1.5 1 l1.5 -1 l1.5 1 l1.5 -1 l1.5 1 l1.5 -1 l1.5 1 l1.5 -1 l1.5 1"/>
<path d="M694.5 424.5 l1.5 -1 l1.5 1 l1.5 -1 l1.5 1 l1.5 -1 l1.5 1 l1.5 -1 l1.5 1 l1.5 -1 l1.5 1"/>
<path d="M528 479.5 l1.5 -1 l1.5 1 l1.5 -1 l1.5 1 l1.5 -1 l1.5 1 l1.5 -1 l1.5 1"/>
</g></svg>
  <div class="abs" style="right:145.6px;top:260.5px;text-align:right;color:#f4f6fc;font-family:'Liberation Serif',serif;font-size:17px;line-height:20.5px;white-space:nowrap">Гліб Соколов<br>Здобувач третього курсу за першим<br>(бакалаврським) рівнем<br>Спеціальності 017 Фізична культура і спорт<br>Науковий керівник: доцент Петро Тодоров</div>
</div>
<svg class="abs" style="left:308px;top:440px" width="12" height="15" viewBox="0 0 12 15"><path d="M1.2 1.2 L1.2 11.5 L3.8 9.2 L5.6 13.2 L7.4 12.4 L5.7 8.6 L9.2 8.4 Z" fill="#0a0a0a" stroke="#f2f2f2" stroke-width="1" stroke-linejoin="round"/></svg>
<div id="video">
  <div class="abs" style="left:-10px;top:-10px;width:314px;height:186px;filter:blur(5px)">
    <div class="abs" style="left:0;top:0;width:314px;height:186px;background:linear-gradient(180deg,#8a856c 0px,#a9a287 14px,#b0a98d 45px,#a79f82 70px,#978e70 95px,#91886a 140px,#8b8165 186px)"></div>
    <div class="abs" style="left:0;top:60px;width:48px;height:126px;background:linear-gradient(90deg,#3e3322 0%,#5e5038 35%,rgba(140,130,100,0) 100%)"></div>
    <div class="abs" style="left:0;top:0;width:30px;height:70px;background:linear-gradient(90deg,#6a624c,rgba(140,130,100,0))"></div>
    <div class="abs" style="left:248px;top:40px;width:66px;height:146px;background:linear-gradient(90deg,rgba(140,120,90,0) 0%,#86705a 45%,#6a5240 75%,#4a3a2c 100%)"></div>
    <div class="abs" style="left:50px;top:66px;width:210px;height:12px;background:rgba(195,188,158,0.3)"></div>
  </div>
  <div class="abs" style="left:0;top:0;width:294px;height:166px;filter:blur(1.3px)">
    <!-- hoodie -->
    <div class="abs" style="left:0;top:0;width:294px;height:166px;background:#1f2537;clip-path:polygon(90px 166px,96px 152px,108px 138px,124px 129px,136px 125px,178px 125px,196px 130px,214px 138px,232px 150px,250px 166px)"></div>
    <div class="abs" style="left:0;top:0;width:294px;height:166px;background:#2a3146;clip-path:polygon(180px 128px,200px 134px,222px 146px,205px 166px,190px 166px,200px 145px);opacity:0.7"></div>
    <!-- neck -->
    <div class="abs" style="left:0;top:0;width:294px;height:166px;background:linear-gradient(180deg,#c8ab9a 110px,#dcc8bc 140px,#e4d4ca 166px);clip-path:polygon(133px 105px,180px 105px,180px 127px,175px 140px,166px 166px,150px 166px,140px 140px,134px 127px)"></div>
    <!-- ears -->
    <div class="abs" style="left:120px;top:80px;width:7px;height:20px;background:#d7bdaf;border-radius:50%"></div>
    <div class="abs" style="left:182px;top:77px;width:7px;height:21px;background:#d7bdaf;border-radius:50%"></div>
    <!-- face -->
    <div class="abs" style="left:124px;top:48px;width:58px;height:79px;background:radial-gradient(ellipse 34px 48px at 29px 40px,#efe2da,#e4d0c6 65%,#d5bcae 100%);border-radius:46% 46% 44% 44% / 34% 34% 64% 64%"></div>
    <!-- hair -->
    <div class="abs" style="left:121px;top:34px;width:63px;height:22px;background:linear-gradient(180deg,#6a5c4a,#5a4d3d);border-radius:50% 55% 20% 25% / 90% 90% 30% 40%"></div>
    <div class="abs" style="left:121px;top:44px;width:7px;height:32px;background:#5c4f3f;border-radius:40% 10% 60% 60%"></div>
    <div class="abs" style="left:177px;top:42px;width:7px;height:32px;background:#5a4d3d;border-radius:10% 40% 60% 60%"></div>
    <!-- eyes/brows/mouth -->
    <div class="abs" style="left:131px;top:70px;width:15px;height:2.5px;background:#8c7262;border-radius:2px;transform:rotate(4deg)"></div>
    <div class="abs" style="left:160px;top:69px;width:15px;height:2.5px;background:#8c7262;border-radius:2px;transform:rotate(-4deg)"></div>
    <div class="abs" style="left:133px;top:77px;width:10px;height:3px;background:#7e685e;border-radius:50%"></div>
    <div class="abs" style="left:162px;top:76px;width:10px;height:3px;background:#7e685e;border-radius:50%"></div>
    <div class="abs" style="left:147px;top:80px;width:9px;height:18px;background:#dcc3b6;border-radius:40%;opacity:0.7"></div>
    <div class="abs" style="left:144.5px;top:102px;width:17px;height:12px;background:#d8a2a4;border-radius:50%"></div>
  </div>
  <!-- nameplate -->
  <div class="abs" style="left:0;top:145.8px;width:91px;height:18px;background:rgba(30,30,30,0.85);border-radius:0 4px 4px 0"></div>
  <svg class="abs" style="left:1px;top:149px" width="16" height="12" viewBox="0 0 16 12"><g fill="#f2f2f2"><rect x="1" y="8" width="1.8" height="3"/><rect x="4.6" y="5.5" width="1.8" height="5.5"/><rect x="8.2" y="3" width="1.8" height="8"/><rect x="11.8" y="0.7" width="1.8" height="10.3"/></g></svg>
  <div class="abs" style="left:19.5px;top:148.5px;font-size:11px;color:#f2f2f2;white-space:nowrap;-webkit-text-stroke:0.3px #f2f2f2">Гліб Соколов</div>
</div>
<div class="abs" style="left:972px;top:389px;width:4px;height:22px;background:#e4e4e6;border-radius:2px"></div>
<!-- top right -->
<div class="abs" style="left:1184px;top:9px;width:88px;height:24px;background:#16181c;border-radius:5px"></div>
<svg class="abs" style="left:1190px;top:10px" width="82" height="22" viewBox="1190 10 82 22">
  <path d="M1201.7 14 L1208.3 16.5 V21 C1208.3 24.8 1205.5 27.2 1201.7 28.2 C1197.9 27.2 1195.1 24.8 1195.1 21 V16.5 Z" fill="#3ad98a"/>
  <path d="M1198.8 21.3 l2 2 l3.6 -3.8" fill="none" stroke="#123a26" stroke-width="1.3"/>
  <path d="M1220 16 V26" stroke="#3a3c40" stroke-width="1.3"/>
  <rect x="1254.7" y="16" width="7.5" height="10.7" fill="#f4f4f4"/>
  <rect x="1263" y="19.4" width="3" height="3.4" fill="#f4f4f4"/>
</svg>
<div class="abs" style="left:1229px;top:15.5px;font-size:11px;letter-spacing:0.4px;color:#f4f4f4;white-space:nowrap;-webkit-text-stroke:0.2px #f4f4f4">Вид</div>
<div class="abs" style="left:1270px;top:4px;width:6px;height:6px;border-radius:50%;background:#3cc05a"></div>
<!-- toolbar -->
<svg class="abs" style="left:0;top:740px" width="1280" height="60" viewBox="0 740 1280 60">
  <g fill="none" stroke="#f2f2f2" stroke-width="1.5" stroke-linecap="round" stroke-linejoin="round">
    <rect x="37" y="754" width="7.6" height="13.5" rx="3.8"/>
    <path d="M34.5 764 a6.2 6.2 0 0 0 12.4 0 M40.8 770.3 v4.4 M37 774.8 h7.6"/>
    <path d="M66.5 765 l3.2 -3.2 l3.2 3.2 M145.5 765 l3.2 -3.2 l3.2 3.2 M427.5 765 l3.2 -3.2 l3.2 3.2 M506.5 765 l3.2 -3.2 l3.2 3.2 M602.5 765 l3.2 -3.2 l3.2 3.2" stroke="#d8d8d8"/>
    <rect x="109.8" y="758.5" width="14" height="12.5" rx="3"/>
    <path d="M124 764.7 l6.5 -5 v11.8 l-6.5 -5"/>
    <circle cx="386" cy="759.5" r="2.8"/>
    <path d="M381.5 772.5 v-2.5 a4.5 4.5 0 0 1 9 0 v2.5 z" />
    <circle cx="393.5" cy="762" r="2.8"/>
    <path d="M389.5 773 h8.5 a1 1 0 0 0 1 -1 v-0.5 a4.7 4.7 0 0 0 -8.5 -2.8"/>
    <path d="M476 757.5 a2.5 2.5 0 0 1 2.5 -2.5 h10.5 a2.5 2.5 0 0 1 2.5 2.5 v7 a2.5 2.5 0 0 1 -2.2 2.4"/>
    <path d="M471.8 767 a7.5 7 0 1 1 5.5 5.8 l-3 1.5 l0.5 -3 a7 7 0 0 1 -3 -4.3 z" fill="#131619"/>
    <path d="M569 773 C563 768 557.8 764.5 557.8 760.2 a4.6 4.6 0 0 1 8.4 -2.5 l2.8 2.2 l2.8 -2.2 a4.6 4.6 0 0 1 8.4 2.5 C580.2 764.5 575 768 569 773 z"/>
    <circle cx="727.5" cy="769.3" r="3"/><circle cx="742" cy="759.3" r="3"/>
    <path d="M725 762 v-3 a3 3 0 0 1 3 -3 h3 M744.5 766.5 v3.3 a3 3 0 0 1 -3 3 h-3.5"/>
    <circle cx="813.2" cy="764.2" r="9.6"/>
    <path d="M884.5 756 a2 2 0 0 1 2 -2 h10 a2 2 0 0 1 2 2 v14 a2 2 0 0 1 -2 2 h-10 a2 2 0 0 1 -2 -2 z M888 759 h7 M888 762.5 h7 M888 766 h4"/>
    <circle cx="980.5" cy="764.2" r="10"/>
    <circle cx="1238.5" cy="757.5" r="2.6"/>
    <path d="M1236 761.5 c-2.5 1 -3.5 3 -3.5 4.5 M1239 761 l1.5 5.5 l3.5 1.5 M1237 765 l-2.5 4 l-2.5 3.5 M1238.5 766.5 l2 3 l0.5 4"/>
  </g>
  <path d="M30.5 773.8 L51.3 754.6" stroke="#d8326b" stroke-width="2.3" stroke-linecap="round"/>
  <g fill="#f2f2f2"><circle cx="476" cy="764.5" r="1"/><circle cx="479.3" cy="764.5" r="1"/><circle cx="482.6" cy="764.5" r="1"/>
    <circle cx="813.2" cy="764.2" r="4.6"/>
    <circle cx="976" cy="764.2" r="1.3"/><circle cx="980.5" cy="764.2" r="1.3"/><circle cx="985" cy="764.2" r="1.3"/>
    <rect x="890" y="769.5" width="12" height="4" rx="2"/>
  </g>
  <g fill="#f2f2f2"><circle cx="884.5" cy="758" r="0.8"/><circle cx="884.5" cy="761" r="0.8"/><circle cx="884.5" cy="764" r="0.8"/><circle cx="884.5" cy="767" r="0.8"/><circle cx="884.5" cy="770" r="0.8"/></g>
  <rect x="643.8" y="755.8" width="22.7" height="17.5" rx="3.5" fill="#36d38b"/>
  <path d="M655.1 769.5 v-8.5 M651.3 764.5 l3.8 -3.8 l3.8 3.8" fill="none" stroke="#0f1a14" stroke-width="2" stroke-linecap="round" stroke-linejoin="round"/>
  <path d="M1241 754.5 h12.5 v18.5 l-8 2 z M1245.5 756.5 v18" fill="none" stroke="#e0245e" stroke-width="1.5" stroke-linejoin="round"/>
  <text x="403.8" y="768" font-family="Liberation Sans" font-size="10" fill="#d2d2d2">74</text>
</svg>
<div class="tb" style="left:0;width:81px">Звук</div>
<div class="tb" style="left:80px;width:80px">Видео</div>
<div class="tb" style="left:340px;width:100px">Участники</div>
<div class="tb" style="left:441px;width:80px">Чат</div>
<div class="tb" style="left:518px;width:100px">Отреагировать</div>
<div class="tb" style="left:605px;width:100px">Поделиться</div>
<div class="tb" style="left:684.5px;width:100px">Приложения</div>
<div class="tb" style="left:763px;width:100px">Запись</div>
<div class="tb" style="left:841.5px;width:100px">Примечания</div>
<div class="tb" style="left:930px;width:100px">Дополнительно</div>
<div class="tb" style="left:1193px;width:100px">Выйти</div>
</body></html>
